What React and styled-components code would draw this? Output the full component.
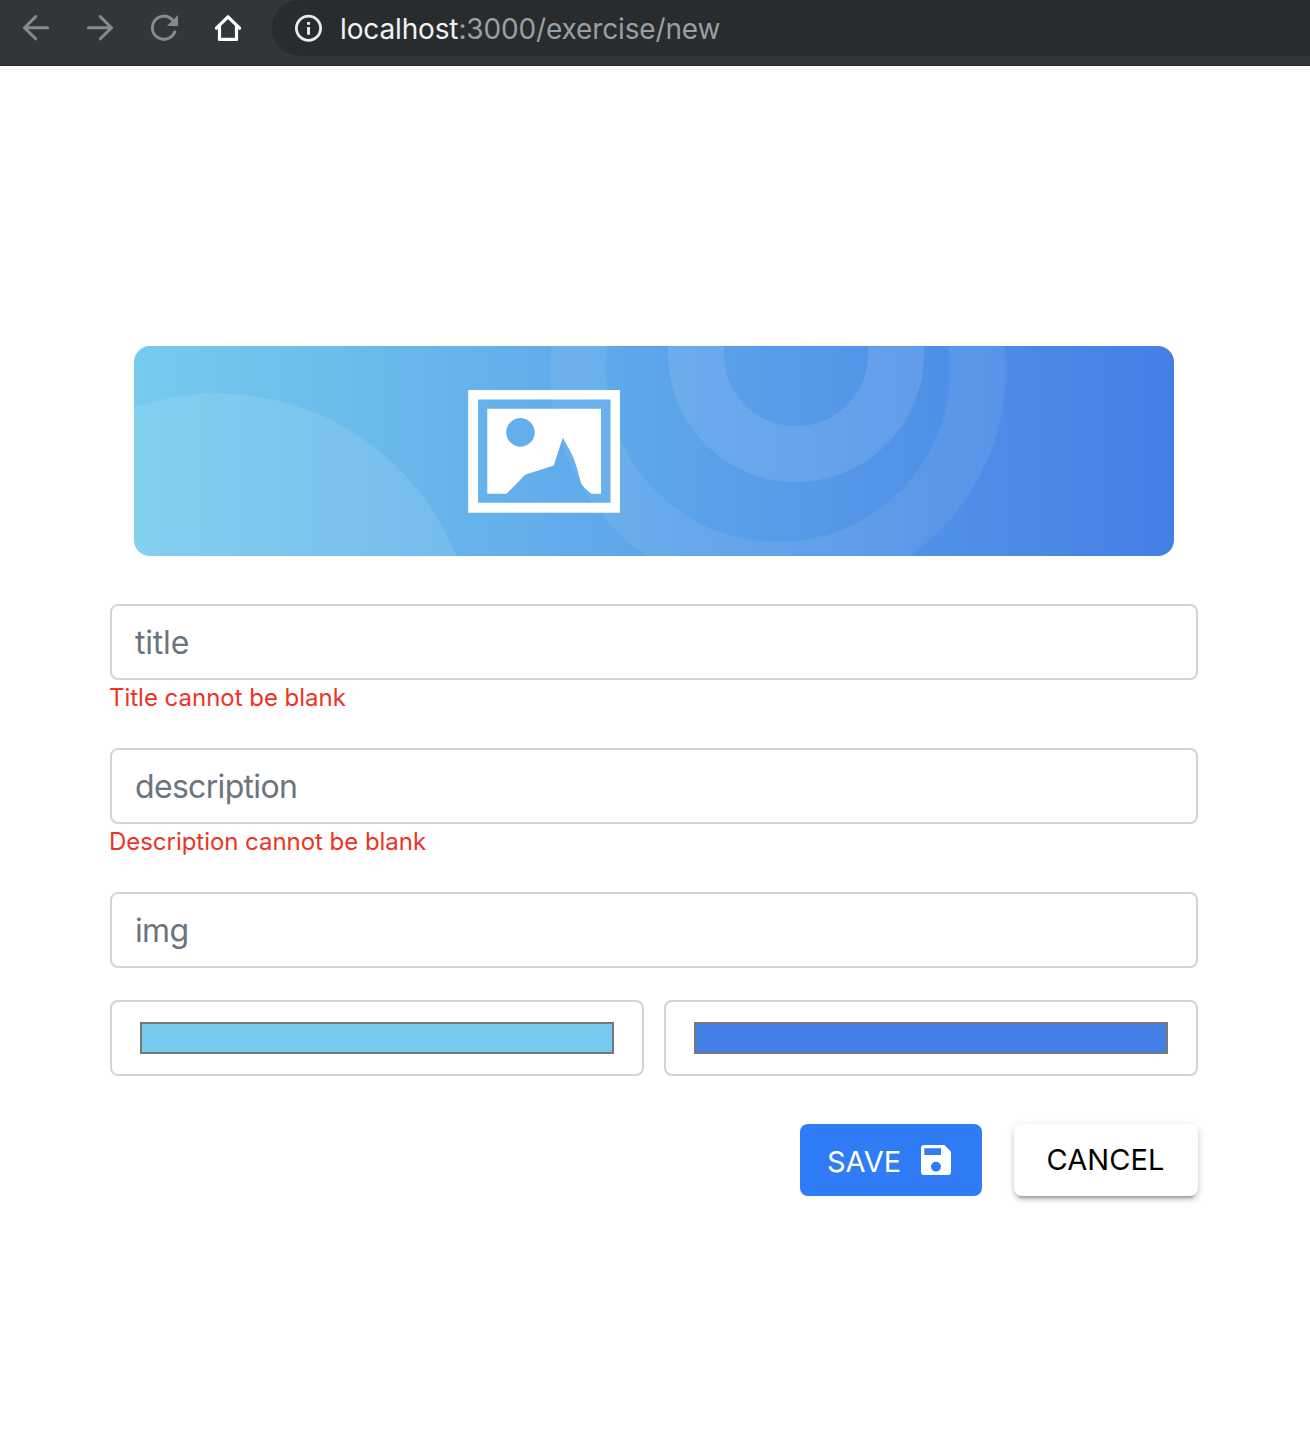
import React from "react";
import styled, { createGlobalStyle } from "styled-components";

const GlobalStyle = createGlobalStyle`
  *, *::before, *::after { box-sizing: border-box; }
  body { margin: 0; background: #fff; font-family: Inter, "Liberation Sans", sans-serif; }
  button, input { font-family: inherit; }
`;

const Page = styled.div`
  min-height: 1440px;
  background: #fff;
`;

const Toolbar = styled.header`
  display: flex;
  height: 66px;
  background: #333639;
  border-bottom: 1px solid #25282b;
`;

const NavButtons = styled.nav`
  display: flex;
  width: 272px;
  height: 56px;
  padding-left: 4px;
`;

const NavButton = styled.button`
  display: flex;
  align-items: center;
  justify-content: center;
  width: 64px;
  height: 56px;
  padding: 0;
  border: 0;
  background: none;
  color: ${(p) => (p.$active ? "#ffffff" : "#88898b")};
`;

const AddressBar = styled.div`
  display: flex;
  flex: 1;
  align-items: center;
  gap: 17px;
  height: 56px;
  padding-left: 22px;
  border-radius: 28px 0 0 28px;
  background: #282c2f;
  color: #e9eaee;
`;

const Address = styled.span`
  padding-top: 1px;
  color: #9a9fa2;
  font-size: 28px;
  line-height: 56px;
  letter-spacing: ${(p) => p.$spacing};
  white-space: nowrap;
`;

const Host = styled.span`
  color: #f1f2f4;
`;

const Form = styled.form`
  display: flex;
  flex-direction: column;
  width: 1088px;
  margin: 280px 0 0 110px;
`;

const Banner = styled.div`
  height: 210px;
  margin: 0 24px 48px;
  border-radius: 16px;
  overflow: hidden;
  background: linear-gradient(90deg, #76cbee, #447fe6);
`;

const Art = styled.svg`
  display: block;
`;

const Field = styled.div`
  height: ${(p) => p.$height}px;
`;

const TextInput = styled.input`
  display: block;
  width: 100%;
  height: 76px;
  padding: 1px 23px 0;
  border: 2px solid #ced4da;
  border-radius: 8px;
  background: #fff;
  font-size: 32px;
  letter-spacing: ${(p) => p.$spacing};
  outline: none;
  &::placeholder { color: #6c757d; opacity: 1; }
`;

const ErrorText = styled.div`
  margin-left: -1px;
  color: #ed3324;
  font-size: 24px;
  line-height: 36px;
  letter-spacing: ${(p) => p.$spacing};
`;

const ColorRow = styled.div`
  display: grid;
  grid-template-columns: 1fr 1fr;
  gap: 20px;
`;

const ColorField = styled.div`
  height: 76px;
  padding: 20px 28px;
  border: 2px solid #ced4da;
  border-radius: 8px;
`;

const Swatch = styled.div`
  height: 32px;
  border: 2px solid #777;
  background: ${(p) => p.$color};
`;

const Actions = styled.div`
  display: flex;
  justify-content: flex-end;
  gap: 32px;
  margin-top: 48px;
`;

const Button = styled.button`
  display: flex;
  align-items: center;
  height: 72px;
  border: 0;
  border-radius: 8px;
  font-size: 29px;
  line-height: 36px;
  white-space: nowrap;
`;

const SaveButton = styled(Button)`
  justify-content: space-between;
  width: 182px;
  padding: 0 31px 0 27px;
  background: #307bf6;
  color: #fff;
`;

const SaveLabel = styled.span`
  padding-top: 3px;
`;

const CancelButton = styled(Button)`
  justify-content: center;
  width: 184px;
  padding: 0 1px 0 0;
  background: #fff;
  color: #000;
  letter-spacing: 0.1px;
  box-shadow: 0 6px 2px -4px rgba(0, 0, 0, 0.2), 0 4px 4px rgba(0, 0, 0, 0.14), 0 2px 10px rgba(0, 0, 0, 0.12);
`;

function Arrow({ flip }) {
  return (
    <svg width="28" height="28" viewBox="0 0 28 28" fill="none" stroke="currentColor" strokeWidth="3" strokeLinecap="round" transform={flip ? "scale(-1 1)" : undefined}>
      <path d="M25.6 13.7H2.8M13.7 2.6 2.5 13.7 13.7 24.8" />
    </svg>
  );
}

function Reload() {
  return (
    <svg width="28" height="28" viewBox="0 0 28 28">
      <path d="M24.7 18A11.6 11.6 0 1 1 22.2 5.6" fill="none" stroke="currentColor" strokeWidth="3" strokeLinecap="round" />
      <path d="M28 1v11H17z" fill="currentColor" />
    </svg>
  );
}

function Home() {
  return (
    <svg width="28" height="28" viewBox="0 0 28 28" fill="none" stroke="currentColor" strokeWidth="3.2" strokeLinecap="round" strokeLinejoin="round">
      <path d="M2.4 14.2 14 2.8 25.6 14.2M5.5 12.5V25.4H22.5V12.5" />
    </svg>
  );
}

function Info() {
  return (
    <svg width="29" height="28" viewBox="0 0 29 28">
      <circle cx="14.5" cy="14.2" r="12.1" fill="none" stroke="currentColor" strokeWidth="2.8" />
      <path d="M13.1 8h2.9v2.8h-2.9zM13.1 13h2.9v7.8h-2.9z" fill="currentColor" />
    </svg>
  );
}

function BannerArt() {
  return (
    <Art width="1040" height="210" viewBox="134 346 1040 210">
      <circle cx="217.5" cy="650" r="256.5" fill="#fff" fillOpacity="0.1" />
      <g fill="none" stroke="#fff" strokeWidth="56">
        <circle cx="778" cy="370" r="200" strokeOpacity="0.07" />
        <circle cx="796" cy="354" r="100" strokeOpacity="0.1" />
      </g>
      <g fill="#fff" fillRule="evenodd">
        <path d="M468.2 390H620V512.7H468.2ZM478 399.5V502.8H610.5V399.5Z" />
        <path d="M487.3 408.8H601V493.8H591.3Q582.5 486.5 581.3 483.5C579 476 576 462.5 571.5 453.5L562.8 437.5 553.8 465.6 526.5 474.3Q524 475.5 522 478L506.5 493.8H487.3ZM520.4 418.1a14.3 14.3 0 1 0 .1 0Z" />
      </g>
    </Art>
  );
}

function Disk() {
  return (
    <svg width="30" height="30" viewBox="3 3 18 18" fill="currentColor">
      <path d="M17 3H5a2 2 0 0 0-2 2v14a2 2 0 0 0 2 2h14a2 2 0 0 0 2-2V7l-4-4zm-5 16a3 3 0 1 1 0-6 3 3 0 0 1 0 6zm3-10H5V5h10v4z" />
    </svg>
  );
}

export default function App() {
  return (
    <Page>
      <GlobalStyle />
      <Toolbar>
        <NavButtons>
          <NavButton type="button"><Arrow /></NavButton>
          <NavButton type="button"><Arrow flip /></NavButton>
          <NavButton type="button"><Reload /></NavButton>
          <NavButton type="button" $active><Home /></NavButton>
        </NavButtons>
        <AddressBar>
          <Info />
          <Address $spacing="-0.14px"><Host>localhost</Host>:3000/exercise/new</Address>
        </AddressBar>
      </Toolbar>
      <Form>
        <Banner><BannerArt /></Banner>
        <Field $height={144}>
          <TextInput placeholder="title" $spacing="-0.2px" />
          <ErrorText $spacing="-0.02px">Title cannot be blank</ErrorText>
        </Field>
        <Field $height={144}>
          <TextInput placeholder="description" $spacing="-0.68px" />
          <ErrorText $spacing="-0.04px">Description cannot be blank</ErrorText>
        </Field>
        <Field $height={108}>
          <TextInput placeholder="img" $spacing="-0.7px" />
        </Field>
        <ColorRow>
          <ColorField><Swatch $color="#76caee" /></ColorField>
          <ColorField><Swatch $color="#447fe6" /></ColorField>
        </ColorRow>
        <Actions>
          <SaveButton type="button"><SaveLabel>SAVE</SaveLabel><Disk /></SaveButton>
          <CancelButton type="button">CANCEL</CancelButton>
        </Actions>
      </Form>
    </Page>
  );
}
